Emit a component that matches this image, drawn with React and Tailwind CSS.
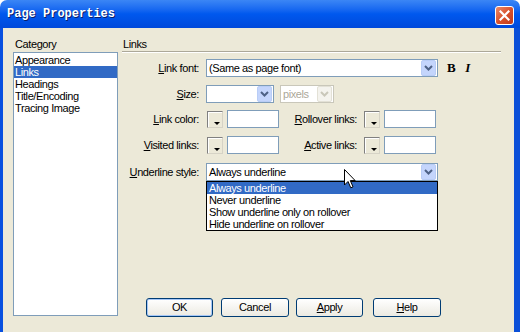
import React from 'react';

const ui = { fontFamily: '"Liberation Sans", Arial, sans-serif' };

function Chevron({ disabled }) {
  return (
    <svg width="9" height="6" viewBox="0 0 9 6">
      <path d="M1 1 L4.5 4.5 L8 1" fill="none" stroke={disabled ? '#c9c7ba' : '#4d6185'} strokeWidth="2" />
    </svg>
  );
}

function Select({ width, value, disabled }) {
  return (
    <div
      className={`flex h-[18px] items-center border bg-white ${disabled ? 'border-[#c9c7ba]' : 'border-[#7f9db9]'}`}
      style={{ width }}
    >
      <div className={`flex-1 truncate pl-[2px] text-[11px] ${disabled ? 'text-[#aca899]' : 'text-black'}`}>{value}</div>
      <div
        className={`mr-[1px] flex h-[16px] w-[15px] items-center justify-center rounded-[2px] border ${
          disabled ? 'border-[#e3e1d6] bg-[#f4f3ee]' : 'border-[#b9cdf6] bg-[#c4d5fc]'
        }`}
      >
        <Chevron disabled={disabled} />
      </div>
    </div>
  );
}

function Swatch() {
  return (
    <div className="relative h-[17px] w-[16px] border border-[#808080] border-r-[#d6d3c6] border-b-[#d6d3c6] bg-[#ece9d8] shadow-[inset_1px_1px_0_#ffffff]">
      <div className="absolute bottom-[2px] right-[2px] h-0 w-0 border-t-[3px] border-l-[3px] border-r-[3px] border-t-black border-l-transparent border-r-transparent" />
    </div>
  );
}

function Input({ width }) {
  return <div className="h-[18px] border border-[#7f9db9] bg-white" style={{ width }} />;
}

function Label({ width, children }) {
  return (
    <div className="shrink-0 pr-[2px] text-right text-[11px] text-black" style={{ width }}>
      {children}
    </div>
  );
}

function Btn({ children, focused, className }) {
  return (
    <div
      className={`flex h-[19px] items-center justify-center rounded-[3px] border border-[#003c74] bg-gradient-to-b from-white to-[#eceae2] text-[11px] text-black ${
        focused ? 'shadow-[inset_0_0_0_1px_#a6c7f7]' : ''
      } ${className}`}
    >
      {children}
    </div>
  );
}

export default function App() {
  return (
    <div className="h-[332px] w-[520px] overflow-hidden bg-white" style={ui}>
      {/* title bar */}
      <div className="flex h-[28px] items-center justify-between rounded-t-[7px] bg-gradient-to-b from-[#3b86f5] via-[#0058ee] to-[#0049db] pl-[7px] pr-[6px]">
        <div
          className="text-[12px] font-bold text-white"
          style={{ fontFamily: '"Liberation Mono", "DejaVu Sans Mono", monospace', textShadow: '1px 1px 0 #0a1e6a' }}
        >
          Page Properties
        </div>
        <div className="mt-[2px] flex h-[19px] w-[19px] items-center justify-center rounded-[3px] border border-white bg-gradient-to-br from-[#e98a6a] via-[#d9512c] to-[#c13a1b]">
          <svg width="11" height="11" viewBox="0 0 11 11">
            <path d="M1.5 1.5 L9.5 9.5 M9.5 1.5 L1.5 9.5" stroke="white" strokeWidth="2.2" strokeLinecap="square" />
          </svg>
        </div>
      </div>

      {/* body */}
      <div className="relative flex h-[304px] border-l-[3px] border-r-[6px] border-l-[#0850e0] border-r-[#0a4fd8] bg-[#ece9d8] tracking-[-0.4px]">
        {/* category column */}
        <div className="ml-[10px] flex w-[105px] flex-col pt-[10px]">
          <div className="h-[14px] pl-[2px] text-[11px] leading-[12px] text-black">Category</div>
          <div className="h-[264px] border border-[#7f9db9] bg-white pt-[1px] text-[11px] leading-[12px]">
            <div className="px-[1px]">Appearance</div>
            <div className="bg-[#316ac5] px-[1px] text-white">Links</div>
            <div className="px-[1px]">Headings</div>
            <div className="px-[1px]">Title/Encoding</div>
            <div className="px-[1px]">Tracing Image</div>
          </div>
        </div>

        {/* right column */}
        <div className="ml-[4px] flex w-[379px] flex-col pt-[10px]">
          <div className="h-[13px] pl-[1px] text-[11px] leading-[12px] text-black">Links</div>
          <div className="border-t border-b border-t-[#aca899] border-b-white" />

          {/* link font */}
          <div className="mt-[6px] flex h-[18px] items-center">
            <Label width="79px">
              <span className="underline">L</span>ink font:
            </Label>
            <div className="ml-[5px]">
              <Select width="232px" value="(Same as page font)" />
            </div>
            <div className="ml-[9px] text-[13px] font-bold" style={{ fontFamily: '"Liberation Serif", serif' }}>B</div>
            <div className="ml-[10px] text-[13px] font-bold italic" style={{ fontFamily: '"Liberation Serif", serif' }}>I</div>
          </div>

          {/* size */}
          <div className="mt-[8px] flex h-[18px] items-center">
            <Label width="79px">
              <span className="underline">S</span>ize:
            </Label>
            <div className="ml-[5px]">
              <Select width="68px" value="" />
            </div>
            <div className="ml-[6px]">
              <Select width="54px" value="pixels" disabled />
            </div>
          </div>

          {/* link color / rollover */}
          <div className="mt-[7px] flex h-[18px] items-center">
            <Label width="79px">
              <span className="underline">L</span>ink color:
            </Label>
            <div className="ml-[6px]">
              <Swatch />
            </div>
            <div className="ml-[4px]">
              <Input width="52px" />
            </div>
            <Label width="80px">
              <span className="underline">R</span>ollover links:
            </Label>
            <div className="ml-[5px]">
              <Swatch />
            </div>
            <div className="ml-[4px]">
              <Input width="52px" />
            </div>
          </div>

          {/* visited / active */}
          <div className="mt-[8px] flex h-[18px] items-center">
            <Label width="79px">
              <span className="underline">V</span>isited links:
            </Label>
            <div className="ml-[6px]">
              <Swatch />
            </div>
            <div className="ml-[4px]">
              <Input width="52px" />
            </div>
            <Label width="80px">
              <span className="underline">A</span>ctive links:
            </Label>
            <div className="ml-[5px]">
              <Swatch />
            </div>
            <div className="ml-[4px]">
              <Input width="52px" />
            </div>
          </div>

          {/* underline style */}
          <div className="mt-[9px] flex h-[18px] items-center">
            <Label width="79px">
              <span className="underline">U</span>nderline style:
            </Label>
            <div className="relative ml-[5px]">
              <Select width="232px" value="Always underline" />
              <div className="absolute left-0 top-[18px] z-10 w-[232px] border border-black bg-white text-[11px] leading-[12px]">
                <div className="bg-[#316ac5] px-[2px] text-white">Always underline</div>
                <div className="px-[2px]">Never underline</div>
                <div className="px-[2px]">Show underline only on rollover</div>
                <div className="px-[2px]">Hide underline on rollover</div>
              </div>
              <svg className="absolute left-[138px] top-[6px] z-20" width="13" height="20" viewBox="0 0 13 20">
                <path d="M0.5 0.5 L0.5 16 L4 12.5 L6.8 18.8 L9 17.8 L6.3 11.6 L11.2 11.6 Z" fill="white" stroke="black" strokeWidth="1" strokeLinejoin="round" />
              </svg>
            </div>
          </div>

          {/* buttons */}
          <div className="mt-auto mb-[15px] flex">
            <Btn focused className="ml-[24px] w-[67px]">OK</Btn>
            <Btn className="ml-[8px] w-[68px]">Cancel</Btn>
            <Btn className="ml-[7px] w-[67px]">
              <span className="underline">A</span>pply
            </Btn>
            <Btn className="ml-[10px] w-[68px]">
              <span className="underline">H</span>elp
            </Btn>
          </div>
        </div>
      </div>
    </div>
  );
}
